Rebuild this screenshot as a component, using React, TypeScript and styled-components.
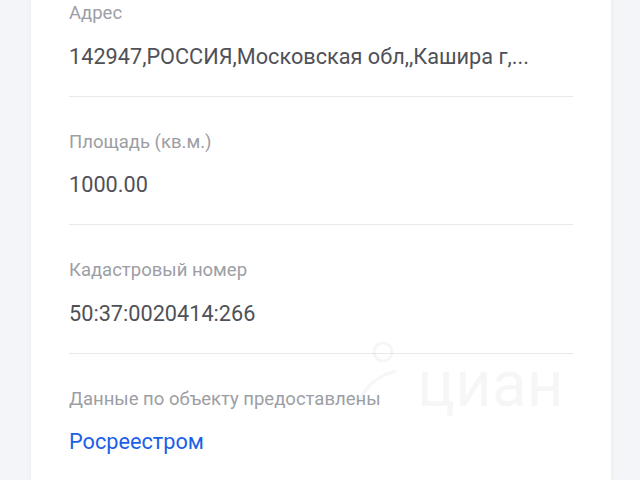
import React from 'react'
import styled, { createGlobalStyle } from 'styled-components'

const GlobalStyle = createGlobalStyle`
  html, body {
    margin: 0;
    padding: 0;
    background: #f4f5f9;
    overflow: hidden;
  }
  body {
    font-family: Roboto, "Noto Sans", "Liberation Sans", sans-serif;
    -webkit-font-smoothing: antialiased;
  }
`

const Page = styled.div`
  width: 640px;
  height: 480px;
  overflow: hidden;
  display: flex;
  justify-content: center;
`

const Card = styled.div`
  position: relative;
  box-sizing: border-box;
  width: 580px;
  margin-left: 2px;
  margin-top: -32px;
  padding: 0 38px 40px;
  background: #ffffff;
  box-shadow: 0 0 0 1px #eef0f5, 0 0 6px rgba(30, 40, 80, 0.05);
`

const Section = styled.div<{ $last?: boolean }>`
  display: flex;
  flex-direction: column;
  gap: 17.5px;
  padding: 33px 0 25px;
  border-bottom: ${({ $last }) => ($last ? 'none' : '1px solid #e9e9ec')};
`

const Label = styled.div`
  font-size: 18.5px;
  line-height: 24px;
  color: #9c9ea5;
`

const Value = styled.div<{ $link?: boolean }>`
  font-size: 21.7px;
  line-height: 28px;
  color: ${({ $link }) => ($link ? '#1c5fe8' : '#4f5157')};
  white-space: nowrap;
`

// faint logo stamped over the card
const Watermark = styled.div`
  position: absolute;
  left: 321px;
  top: 369px;
  display: flex;
  align-items: flex-end;
  gap: 5px;
  pointer-events: none;
  color: rgba(20, 30, 60, 0.04);
`

const WatermarkText = styled.span`
  font-family: Roboto, sans-serif;
  font-size: 64px;
  line-height: 64px;
`

const rows = [
  { label: 'Адрес', value: '142947,РОССИЯ,Московская обл,,Кашира г,...' },
  { label: 'Площадь (кв.м.)', value: '1000.00' },
  { label: 'Кадастровый номер', value: '50:37:0020414:266' },
]

const App = () => (
  <>
    <GlobalStyle />
    <Page>
      <Card>
        {rows.map((row) => (
          <Section key={row.label}>
            <Label>{row.label}</Label>
            <Value>{row.value}</Value>
          </Section>
        ))}
        <Section $last>
          <Label>Данные по объекту предоставлены</Label>
          <Value $link>Росреестром</Value>
        </Section>
        <Watermark>
          <svg width="60" height="80" viewBox="0 0 60 80" fill="none" stroke="currentColor" strokeWidth="3">
            <circle cx="31" cy="15" r="9" />
            <path d="M6 66 C 14 48, 28 38, 44 34" />
          </svg>
          <WatermarkText>циан</WatermarkText>
        </Watermark>
      </Card>
    </Page>
  </>
)

export default App
